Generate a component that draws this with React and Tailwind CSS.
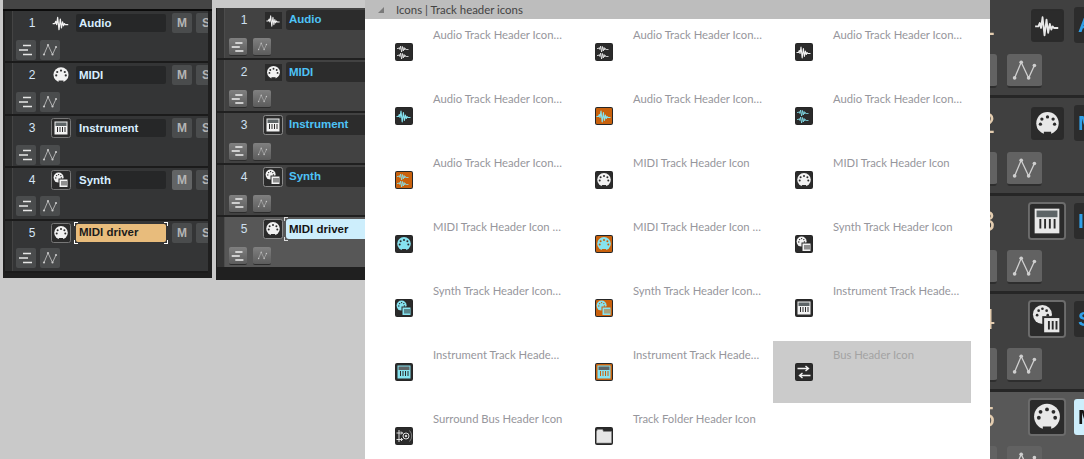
// App.jsx
const WHITE = "#f2f2f2";
const CYAN = "#86e3f0";
const DARK = "#2b2b2b";
const ORANGE = "#c9610c";

function Wave({ color }) {
  return (
    <path
      d="M1.500 9.500h2l.8-2 .8 3 .9-6.500 1.200 11 1.200-9.500 1 8 1-5.500.9 3.500.8-2 .8 1h2.600"
      fill="none"
      stroke={color}
      strokeWidth="1.100"
      strokeLinejoin="round"
    />
  );
}

function DoubleWave({ color }) {
  return (
    <g fill="none" stroke={color} strokeWidth="0.800" strokeLinejoin="round">
      <path d="M2 5.500h1.500l.7-1 .7 2 .8-3.500.9 6 .9-5.500.8 4.500.8-3.500.7 2.500.7-1.500.7 1h2.300" />
      <path d="M2 12.500h1.500l.7-1 .7 2 .8-3.500.9 6 .9-5.500.8 4.500.8-3.500.7 2.500.7-1.500.7 1h2.300" />
    </g>
  );
}

function Midi({ color, bg }) {
  return (
    <g>
      <circle cx="9" cy="8.800" r="6.800" fill={color} />
      <rect x="6.800" y="14" width="4.400" height="2" fill={bg} />
      {[[4.700, 9.400], [5.600, 6.300], [9, 5], [12.400, 6.300], [13.300, 9.400]].map(([x, y]) => (
        <circle key={x} cx={x} cy={y} r="1" fill={bg} />
      ))}
    </g>
  );
}

function Synth({ color, bg }) {
  return (
    <g>
      <circle cx="6.600" cy="6.600" r="5" fill={color} />
      {[[3.800, 7], [4.600, 4.600], [6.600, 3.600], [8.800, 4.600], [9.400, 7]].map(([x, y]) => (
        <circle key={x} cx={x} cy={y} r="0.700" fill={bg} />
      ))}
      <rect x="6.500" y="7.500" width="9.500" height="9" fill={bg} />
      <rect x="7.500" y="8.500" width="8" height="7.500" fill={color} />
      <path d="M10 10v4.500M12 10v4.500M14 10v4.500" stroke={bg} strokeWidth="1" />
    </g>
  );
}

function Keys({ color, bg, top }) {
  return (
    <g>
      <rect x="2.500" y="2.500" width="13" height="13" fill={color} />
      <rect x="3.500" y="3.500" width="11" height="3.500" fill={top} />
      <path d="M5.500 8v5M8 8v5M10.500 8v5M13 8v5" stroke={bg} strokeWidth="1" />
    </g>
  );
}

function BusGlyph() {
  return (
    <g fill="none" stroke={WHITE} strokeWidth="1.400">
      <path d="M2.500 5.500h11M10.500 3 13.500 5.500l-3 2.500" />
      <path d="M15.500 12.500h-11M7.500 10 4.500 12.500l3 2.500" />
    </g>
  );
}

function SurroundGlyph() {
  return (
    <g fill="none" stroke={WHITE} strokeWidth="0.900">
      <path d="M1.500 6h6M6 4.500l1.500 1.500L6 7.500M1.500 12.500h6M6 11l1.500 1.500L6 14" />
      <path d="M4 3v12" />
      <circle cx="11" cy="9" r="3" />
      <circle cx="11" cy="9" r="0.800" fill={WHITE} />
      <path d="M14.500 3.500a8 8 0 0 1 0 11" stroke="#888" />
    </g>
  );
}

function FolderGlyph() {
  return (
    <path d="M1.500 4.500 2.500 2.500h5l1 2H16.500V16H1.500z" fill="#e6e6e6" stroke="#8c8c8c" strokeWidth="0.600" />
  );
}

function Glyph({ kind, color = WHITE, bg = DARK }) {
  if (kind === "wave") return <Wave color={color} />;
  if (kind === "wave2") return <DoubleWave color={color} />;
  if (kind === "midi") return <Midi color={color} bg={bg} />;
  if (kind === "synth") return <Synth color={color} bg={bg} />;
  if (kind === "keys") return <Keys color={color} bg={bg} top="#5d6466" />;
  if (kind === "bus") return <BusGlyph />;
  if (kind === "surround") return <SurroundGlyph />;
  return <FolderGlyph />;
}

const rows = [
  [
    { label: "Audio Track Header Icon…", kind: "wave2" },
    { label: "Audio Track Header Icon…", kind: "wave2" },
    { label: "Audio Track Header Icon…", kind: "wave" },
  ],
  [
    { label: "Audio Track Header Icon…", kind: "wave", tint: "cyan" },
    { label: "Audio Track Header Icon…", kind: "wave", tint: "orange" },
    { label: "Audio Track Header Icon…", kind: "wave2", tint: "cyan" },
  ],
  [
    { label: "Audio Track Header Icon…", kind: "wave2", tint: "orange" },
    { label: "MIDI Track Header Icon", kind: "midi" },
    { label: "MIDI Track Header Icon", kind: "midi" },
  ],
  [
    { label: "MIDI Track Header Icon …", kind: "midi", tint: "cyan" },
    { label: "MIDI Track Header Icon …", kind: "midi", tint: "orange" },
    { label: "Synth Track Header Icon", kind: "synth" },
  ],
  [
    { label: "Synth Track Header Icon…", kind: "synth", tint: "cyan" },
    { label: "Synth Track Header Icon…", kind: "synth", tint: "orange" },
    { label: "Instrument Track Heade…", kind: "keys" },
  ],
  [
    { label: "Instrument Track Heade…", kind: "keys", tint: "cyan" },
    { label: "Instrument Track Heade…", kind: "keys", tint: "orange" },
    { label: "Bus Header Icon", kind: "bus", selected: true },
  ],
  [
    { label: "Surround Bus Header Icon", kind: "surround" },
    { label: "Track Folder Header Icon", kind: "folder" },
  ],
];

const tracks = [
  { n: 1, name: "Audio", kind: "wave", gap: "mt-[7px]" },
  { n: 2, name: "MIDI", kind: "midi", gap: "mt-[7px]" },
  { n: 3, name: "Instrument", kind: "keys", boxed: true, gap: "mt-[7px]" },
  { n: 4, name: "Synth", kind: "synth", boxed: true, gap: "mt-[6px]" },
  { n: 5, name: "MIDI driver", kind: "midi", boxed: true, active: true, gap: "mt-[5px]" },
];

function Tile({ item }) {
  const orange = item.tint === "orange";
  const color = item.tint ? CYAN : WHITE;
  const bg = orange ? ORANGE : DARK;
  return (
    <svg viewBox="0 0 18 18" className="w-[18px] h-[18px] shrink-0">
      <rect x="0" y="0" width="18" height="18" rx="2" fill="#262626" />
      <rect x="1" y="1" width="16" height="16" rx="1" fill={bg} />
      <Glyph kind={item.kind} color={color} bg={bg} />
    </svg>
  );
}

function ListIcon({ color, className }) {
  return (
    <svg viewBox="0 0 20 20" className={className}>
      <path d="M7 5.500h8M3 10h9M7 14.500h9" stroke={color} strokeWidth="1.600" />
    </svg>
  );
}

function CurveIcon({ color, className }) {
  return (
    <svg viewBox="0 0 20 20" className={className}>
      <path d="M4 14.500 8 5l4.500 9.500L16 7" fill="none" stroke={color} strokeWidth="0.800" />
      {[[4, 14.500], [8, 5], [12.500, 14.500], [16, 7]].map(([x, y]) => (
        <circle key={x} cx={x} cy={y} r="1.100" fill={color} />
      ))}
    </svg>
  );
}

function Corners({ color }) {
  return (
    <>
      <span className="absolute -left-[2px] -top-[2px] w-[4px] h-[4px] border-l border-t" style={{ borderColor: color }} />
      <span className="absolute -right-[2px] -top-[2px] w-[4px] h-[4px] border-r border-t" style={{ borderColor: color }} />
      <span className="absolute -left-[2px] -bottom-[2px] w-[4px] h-[4px] border-l border-b" style={{ borderColor: color }} />
      <span className="absolute -right-[2px] -bottom-[2px] w-[4px] h-[4px] border-r border-b" style={{ borderColor: color }} />
    </>
  );
}

function TrackA({ track }) {
  const btn = "w-5 h-5 shrink-0 rounded-[2px] flex items-center justify-center text-[12px] font-bold text-[#b4b4b4]";
  return (
    <div className="h-[52.4px] flex border-b-2 border-[#1b1b1b] bg-[#343536]">
      <div className="w-[8px] shrink-0 bg-[#2b2c2c] border-r border-[#444]" />
      <div className="flex-1 min-w-0 overflow-hidden pt-[2px]">
        <div className="flex items-center h-5 w-[220px]">
          <span className="w-[38px] text-center text-[12px] text-[#d6e6f6]">{track.n}</span>
          {track.boxed ? (
            <svg viewBox="0 0 20 20" className="w-5 h-5 shrink-0">
              <rect x="0.500" y="0.500" width="19" height="19" rx="2" fill="#2b2b2b" stroke="#777" />
              <g transform="translate(1 1)"><Glyph kind={track.kind} bg="#2b2b2b" /></g>
            </svg>
          ) : (
            <svg viewBox="0 0 18 18" className="w-5 h-5 shrink-0"><Glyph kind={track.kind} bg="#343536" /></svg>
          )}
          <div className={`relative ml-[5px] w-[90px] h-[18px] rounded-[2px] pl-[3px] pt-[1px] flex items-center text-[11.500px] font-bold whitespace-nowrap ${track.active ? "bg-[#e8bc7c] text-[#1c1c1c]" : "bg-[#262728] text-[#d8eeff]"}`}>
            {track.name}
            {track.active && <Corners color="#ffffff" />}
          </div>
          <div className={`${btn} ml-[6px] ${track.n === 4 ? "bg-[#626465]" : "bg-[#4a4c4d]"}`}>M</div>
          <div className={`${btn} ml-[4px] bg-[#4a4c4d]`}>S</div>
        </div>
        <div className={`flex gap-1 ml-[3px] ${track.gap}`}>
          <div className="w-5 h-5 rounded-[2px] bg-[#4a4c4d]"><ListIcon color="#e6e6e6" className="w-5 h-5" /></div>
          <div className="w-5 h-5 rounded-[2px] bg-[#4a4c4d]"><CurveIcon color="#c8c8c8" className="w-5 h-5" /></div>
        </div>
      </div>
    </div>
  );
}

function TrackB({ track }) {
  const rowBg = track.active ? "bg-[#575757]" : "bg-[#424242]";
  const btn = "w-[18px] h-[18px] flex items-center justify-center rounded-[2px] bg-gradient-to-b from-[#808080] to-[#5c5c5c] border-b border-[#2c2c2c]";
  return (
    <div className={`h-[52.3px] flex border-b-2 border-[#202020] ${rowBg}`}>
      <div className="w-[8px] shrink-0 bg-[#353535] border-r border-[#4c4c4c]" />
      <div className="flex-1 min-w-0 overflow-hidden pt-[2px]">
        <div className="flex items-center h-5 w-[200px]">
          <span className="w-[38px] text-center text-[12px] text-[#cfe0f0]">{track.n}</span>
          <div className="w-5 h-5 shrink-0 flex items-center justify-center">
            {track.boxed ? (
              <svg viewBox="0 0 20 20" className="w-5 h-5">
                <rect x="0.500" y="0.500" width="19" height="19" rx="2" fill="#2b2b2b" stroke="#8a8a8a" />
                <g transform="translate(1 1)"><Glyph kind={track.kind} bg="#2b2b2b" /></g>
              </svg>
            ) : (
              <svg viewBox="0 0 18 18" className="w-[17px] h-[17px]">
                <rect width="18" height="18" fill="#2b2b2b" />
                <Glyph kind={track.kind} bg="#2b2b2b" />
              </svg>
            )}
          </div>
          <div className={`relative ml-[3px] w-[100px] h-5 rounded-[3px] pl-[3px] flex items-center text-[11.500px] font-bold whitespace-nowrap ${track.active ? "bg-[#cdeefc] text-[#151515]" : "bg-[#2c2c2c] text-[#4ec3f7]"}`}>
            {track.name}
            {track.active && <Corners color="#dddddd" />}
          </div>
        </div>
        <div className="flex gap-[6px] mt-[8px] ml-[4px]">
          <div className={btn}><ListIcon color="#f0f0f0" className="w-[18px] h-[18px]" /></div>
          <div className={btn}><CurveIcon color="#c4c4c4" className="w-[13px] h-[13px]" /></div>
        </div>
      </div>
    </div>
  );
}

function TrackZoomed({ track }) {
  const rowBg = track.active ? "bg-[#585858]" : "bg-[#404040]";
  const btn = "w-[35px] h-[34px] shrink-0 rounded-[3px] bg-[#626262] border-b-2 border-[#2e2e2e]";
  return (
    <div className={`h-[98px] border-b-[3px] border-[#262626] pt-[6px] ${rowBg}`}>
      <div className="flex items-center h-[38px] w-[200px] -ml-[32px]">
        <span className="w-[58px] text-center text-[29px] leading-none text-[#e4cdb0]">{track.n}</span>
        <div className="ml-[12px] w-[38px] h-[38px] shrink-0 flex items-center justify-center">
          <svg viewBox="0 0 20 20" className={track.boxed ? "w-[38px] h-[38px]" : "w-[33px] h-[33px]"}>
            <rect x="0.500" y="0.500" width="19" height="19" rx="1.500" fill="#2b2b2b" stroke={track.boxed ? "#6c6c6c" : "#2b2b2b"} />
            <g transform="translate(1 1)"><Glyph kind={track.kind} color="#e8e8e8" bg="#2b2b2b" /></g>
          </svg>
        </div>
        <div className={`relative ml-[8px] w-[80px] h-[36px] rounded-[3px] pl-[4px] flex items-center text-[21px] font-bold whitespace-nowrap ${track.active ? "bg-[#cdeefc] text-[#151515]" : "bg-[#2c2c2c] text-[#2f9fe8]"}`}>
          {track.name}
        </div>
      </div>
      <div className="flex gap-[10px] mt-[10px] w-[200px] -ml-[28px]">
        <div className={btn} />
        <div className={btn}><CurveIcon color="#cfcfcf" className="w-[35px] h-[33px]" /></div>
      </div>
    </div>
  );
}

export default function App() {
  return (
    <div className="w-[1084px] h-[459px] flex overflow-hidden bg-[#c9c9c9] font-['Liberation_Sans',sans-serif]">
      {/* Track list, dark theme */}
      <div className="ml-[3px] w-[209px] h-[278px] shrink-0 bg-[#1f1f1f] flex flex-col">
        <div className="h-[9px] bg-[#454545]" />
        <div className="h-[2px] bg-[#0c0c0c]" />
        <div className="ml-[2px] mr-[4px]">
          {tracks.map((t) => <TrackA key={t.n} track={t} />)}
        </div>
      </div>

      {/* Track list, lighter theme */}
      <div className="ml-[4px] mt-[8px] w-[149px] h-[272px] shrink-0 bg-[#202020] pl-[1px]">
        {tracks.map((t) => <TrackB key={t.n} track={t} />)}
      </div>

      {/* Icon browser */}
      <div className="w-[625px] h-full shrink-0 bg-white font-['Lato',sans-serif]">
        <div className="h-[19px] bg-[#bdbdbd] flex items-center text-[11.400px] text-[#444444]">
          <svg viewBox="0 0 8 8" className="ml-[12px] w-2 h-2"><path d="M7 1v6H1z" fill="#7a7a7a" /></svg>
          <span className="ml-[11px]">Icons | Track header icons</span>
        </div>
        <div className="pt-[2px] pl-[8px] grid grid-cols-[200px_200px_200px] auto-rows-[64px]">
          {rows.flat().map((item, i) => (
            <div key={i} className={`w-[198px] h-[62px] flex ${item.selected ? "bg-[#cbcbcb]" : ""}`}>
              <div className="ml-[22px] mt-[22px]"><Tile item={item} /></div>
              <span className={`ml-[20px] mt-[6px] h-4 leading-4 text-[11.250px] whitespace-nowrap ${item.selected ? "text-[#a3a3a3]" : "text-[#96969c]"}`}>
                {item.label}
              </span>
            </div>
          ))}
        </div>
      </div>

      {/* Enlarged track list */}
      <div className="w-[94px] h-full shrink-0 overflow-hidden bg-[#404040] blur-[0.4px]">
        {tracks.map((t) => <TrackZoomed key={t.n} track={t} />)}
      </div>
    </div>
  );
}
